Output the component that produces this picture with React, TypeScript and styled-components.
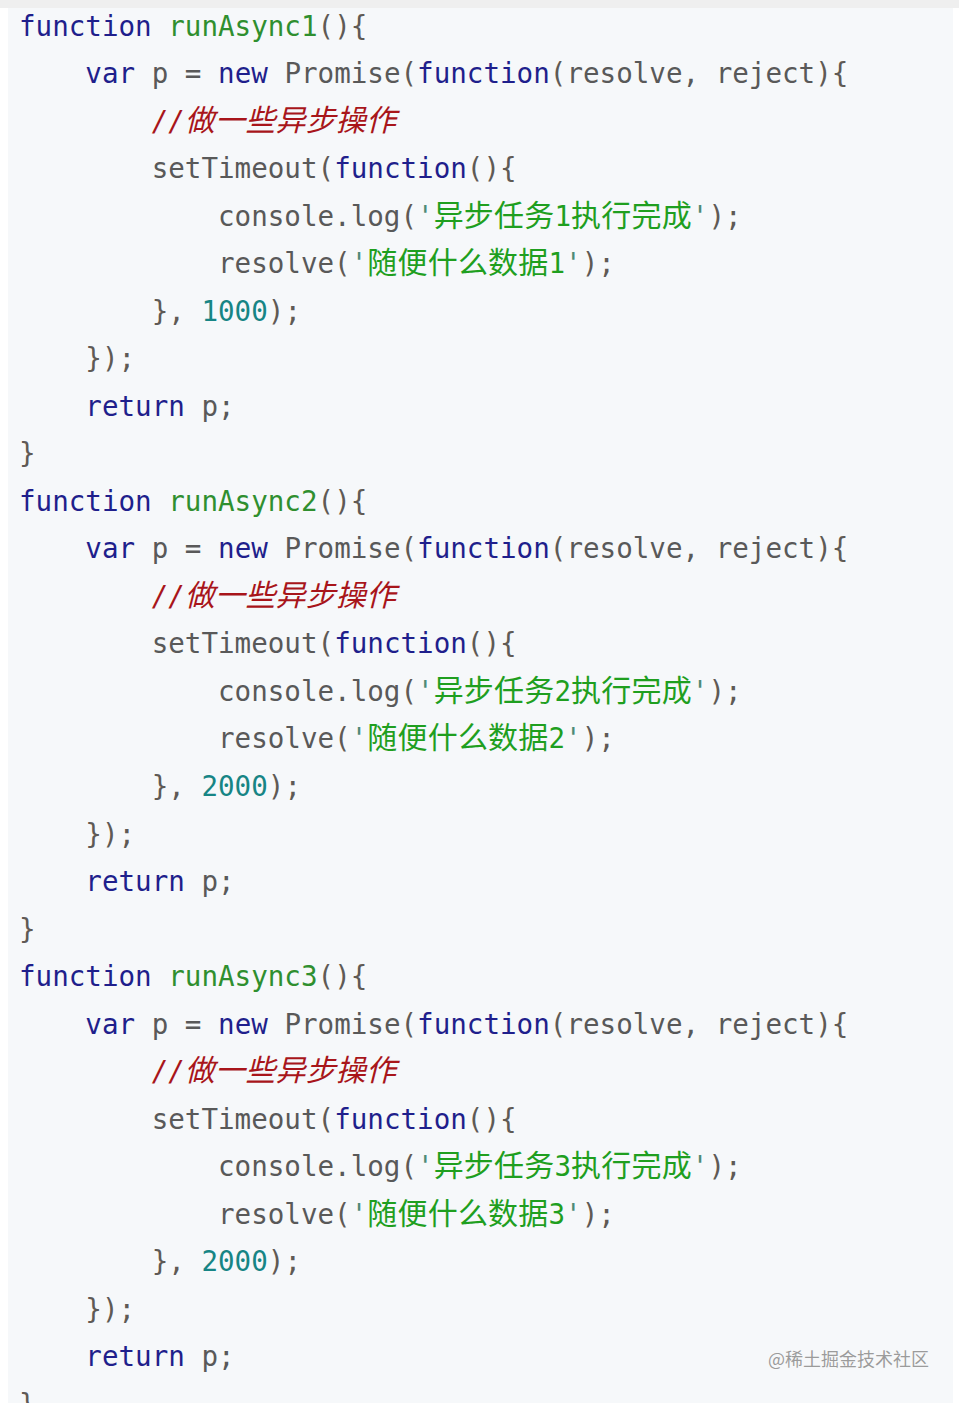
import React from "react";
import styled, { createGlobalStyle } from "styled-components";

const GlobalStyle = createGlobalStyle`
  html, body {
    margin: 0;
    padding: 0;
    background: #ffffff;
    overflow: hidden;
  }
`;

const Page = styled.div`
  position: relative;
  width: 959px;
  height: 1403px;
  overflow: hidden;
  background: #ffffff;
`;

const TopStrip = styled.div`
  height: 8px;
  background: #efefef;
`;

const CodeBlock = styled.pre`
  position: relative;
  display: flex;
  flex-direction: column;
  margin: 0 6px 0 8px;
  padding: 0 0 0 11px;
  background: #f6f8fa;
  font-family: "DejaVu Sans Mono", "Liberation Mono", monospace;
  font-size: 27.55px;
  color: #595959;
`;

const Lines = styled.div`
  margin-top: -5.5px;
`;

const Line = styled.div`
  height: 47.54px;
  line-height: 47.54px;
  white-space: pre;
`;

type Kind = "kw" | "fn" | "plain" | "punc" | "num" | "str" | "cmt";

const colors: Record<Kind, string> = {
  kw: "#1f1f8c",
  fn: "#2f8f2f",
  plain: "#595959",
  punc: "#5f5a55",
  num: "#178585",
  str: "#1f9f1f",
  cmt: "#a8151a",
};

const Tok = styled.span<{ $kind: Kind }>`
  color: ${(p) => colors[p.$kind]};
  font-style: ${(p) => (p.$kind === "cmt" ? "italic" : "normal")};
`;

const Quote = styled.span`
  color: #4f8a78;
`;

const Cjk = styled.span`
  font-family: "Noto Sans CJK SC", "Noto Sans CJK JP", sans-serif;
  font-size: 30px;
  line-height: 1;
  letter-spacing: 0.2px;
`;

const Watermark = styled.div`
  position: absolute;
  right: 24px;
  top: 1337px;
  font-family: "Noto Sans CJK SC", "Noto Sans", sans-serif;
  font-size: 18px;
  line-height: 26px;
  color: #9b9b9b;
  text-shadow: 0 0 1px #ffffff;
`;

type T = [Kind, string] | string;

const renderText = (text: string) => {
  const parts = text.split(/([\u4e00-\u9fff]+)/);
  return parts.map((p, i) =>
    /[\u4e00-\u9fff]/.test(p) ? <Cjk key={i}>{p}</Cjk> : p.length ? <React.Fragment key={i}>{p}</React.Fragment> : null
  );
};

const renderStr = (text: string) => {
  const inner = text.slice(1, -1);
  return (
    <>
      <Quote>'</Quote>
      {renderText(inner)}
      <Quote>'</Quote>
    </>
  );
};

const block = (n: number, delay: string): T[][] => [
  [["kw", "function"], " ", ["fn", `runAsync${n}`], ["punc", "(){"]],
  [
    "    ",
    ["kw", "var"],
    ["plain", " p = "],
    ["kw", "new"],
    ["plain", " Promise"],
    ["punc", "("],
    ["kw", "function"],
    ["punc", "("],
    ["plain", "resolve, reject"],
    ["punc", "){"],
  ],
  ["        ", ["cmt", "//做一些异步操作"]],
  ["        ", ["plain", "setTimeout"], ["punc", "("], ["kw", "function"], ["punc", "(){"]],
  ["            ", ["plain", "console.log"], ["punc", "("], ["str", `'异步任务${n}执行完成'`], ["punc", ");"]],
  ["            ", ["plain", "resolve"], ["punc", "("], ["str", `'随便什么数据${n}'`], ["punc", ");"]],
  ["        ", ["punc", "}, "], ["num", delay], ["punc", ");"]],
  ["    ", ["punc", "});"]],
  ["    ", ["kw", "return"], ["plain", " p;"]],
  [["punc", "}"]],
];

const code: T[][] = [...block(1, "1000"), ...block(2, "2000"), ...block(3, "2000")];

export default function App() {
  return (
    <>
      <GlobalStyle />
      <Page>
        <TopStrip />
        <CodeBlock>
          <Lines>
            {code.map((line, li) => (
              <Line key={li}>
                {line.map((t, ti) => {
                  if (typeof t === "string") return <React.Fragment key={ti}>{t}</React.Fragment>;
                  const [kind, text] = t;
                  return (
                    <Tok key={ti} $kind={kind}>
                      {kind === "str" ? renderStr(text) : renderText(text)}
                    </Tok>
                  );
                })}
              </Line>
            ))}
          </Lines>
          <Watermark>@稀土掘金技术社区</Watermark>
        </CodeBlock>
      </Page>
    </>
  );
}
